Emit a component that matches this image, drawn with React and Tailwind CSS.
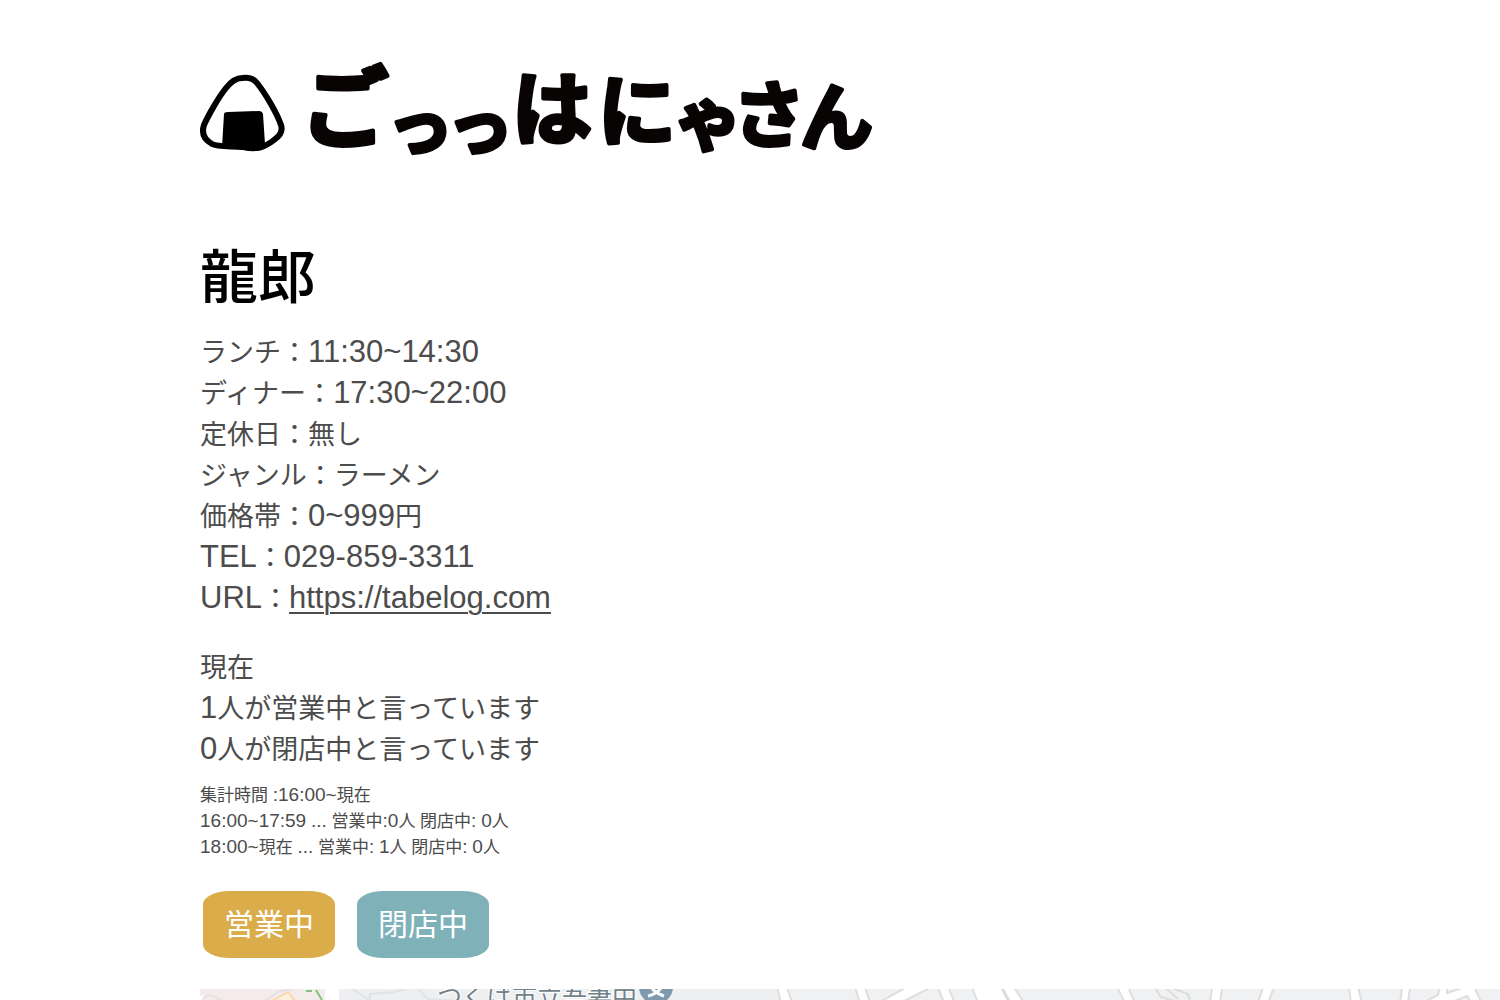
const HOURS = [
  'ランチ：11:30~14:30',
  'ディナー：17:30~22:00',
  '定休日：無し',
  'ジャンル：ラーメン',
  '価格帯：0~999円',
  'TEL：029-859-3311',
];

const LETTERS = [
  { c: 'ご', x: 101, y: 80, s: 88 },
  { c: 'っ', x: 187, y: 90, s: 66 },
  { c: 'っ', x: 247, y: 90, s: 66 },
  { c: 'は', x: 312, y: 78, s: 80 },
  { c: 'に', x: 398, y: 80, s: 78 },
  { c: 'ゃ', x: 474, y: 85, s: 68 },
  { c: 'さ', x: 533, y: 81, s: 72 },
  { c: 'ん', x: 600, y: 84, s: 73 },
];

function Logo() {
  return (
    <svg
      viewBox="0 0 680 100"
      className="block w-[680px] max-w-full overflow-visible font-['Noto_Sans_CJK_JP',sans-serif]"
      role="img"
      aria-label="ごっっはにゃさん"
    >
      <path
        d="M42 18C35 18 30 23 26 28C18 38 8 56 4 65C1 74 5 80 12 84C17 87 31 86 43 87C58 90 65 87 74 80C80 76 83 71 81 65C77 53 65 33 57 23C53 18 48 17 42 18Z"
        fill="none"
        stroke="#000"
        strokeWidth="6"
        strokeLinejoin="round"
      />
      <path d="M24 54Q24 52 28 52L59 51Q62 51 63 54L65 84Q55 91 43 89L22 87Z" fill="#000" />
      {LETTERS.map((l, i) => (
        <text
          key={i}
          x={l.x}
          y={l.y}
          fontSize={l.s}
          fill="#080403"
          stroke="#080403"
          strokeWidth="4"
          strokeLinejoin="round"
          className="font-bold"
        >
          {l.c}
        </text>
      ))}
    </svg>
  );
}

function Line({ children, small }) {
  return (
    <p>
      {children.split(/([\x21-\x7e]+)/).map((part, i) =>
        i % 2 ? (
          <span key={i} className={small ? 'text-[19px] leading-none' : 'text-[31px] leading-none'}>
            {part}
          </span>
        ) : (
          part
        ),
      )}
    </p>
  );
}

function MapStrip() {
  return (
    <svg
      viewBox="0 0 1300 300"
      preserveAspectRatio="xMinYMin slice"
      className="block h-[300px] w-full bg-[#f0f1f3]"
      role="img"
      aria-label="地図"
    >
      <path d="M0 0H577V300H0Z" fill="#eeeff0" />
      <path d="M0 0H125V300H0Z" fill="#f6ebeb" />
      <path d="M-2 11L10 6L28 14" fill="none" stroke="#e4e2e2" strokeWidth="2" />
      <path d="M-2 8L4 6L0 14Z" fill="#fff" />
      <path d="M62 14L78 3L92 0" fill="none" stroke="#e4e2e2" strokeWidth="2" />
      <path d="M72 12L88 3L95 12" fill="#fef0df" stroke="#fbd8aa" strokeWidth="2" />
      <path d="M106 2H112M116 1L122 11" fill="none" stroke="#7cc67c" strokeWidth="2" />
      <path d="M125 0H139L141 300H127Z" fill="#fff" />
      <path d="M152 0L166 9L172 12M169 12L170 5L195 3L205 0M218 0L228 10L265 12" fill="none" stroke="#e2e3e4" strokeWidth="2" />
      <g fill="#fff" stroke="#dedede" strokeWidth="2">
        <path d="M577 -2H587L592 14H581Z" />
        <path d="M655 -2H665L670 14H660Z" />
        <path d="M678 14L707 -2H732L700 14Z" />
        <path d="M738 -2H748L755 14H744Z" />
        <path d="M772 -2H814L824 14H778Z" />
        <path d="M917 -2L925 14H935L928 -2Z" />
        <path d="M1012 -2L1010 14H1020L1022 -2Z" />
        <path d="M1063 -2L1058 14H1068L1074 -2Z" />
        <path d="M1149 -2L1151 14H1162L1158 -2Z" />
        <path d="M1202 -2L1200 14H1208L1210 -2Z" />
        <path d="M1240 -2L1238 6L1222 14H1250L1267 7L1272 14H1282L1274 -2H1265L1247 4V-2Z" />
      </g>
      <path d="M802 -1L809 12" fill="none" stroke="#dcdcdc" strokeWidth="3" />
      <path d="M955 -1L961 8L975 12M966 -1L978 10M972 -1L988 5L990 12" fill="none" stroke="#dcdcdc" strokeWidth="2" />
      <text x="237" y="17" fontSize="25" fill="#71828b" stroke="#fff" strokeWidth="2" paintOrder="stroke">
        つくば市立吾妻中
      </text>
      <circle cx="456" cy="-2" r="17" fill="#7f9aad" />
      <path d="M449 -6Q453 4 464 7M463 -4Q458 5 448 7" fill="none" stroke="#fff" strokeWidth="3" />
    </svg>
  );
}

export default function App() {
  return (
    <div
      className="h-screen overflow-hidden bg-white pl-[200px] font-['Liberation_Sans','Noto_Sans_CJK_JP',sans-serif] text-[#4c4c4c]"
      lang="ja"
    >
      <header className="pt-[60px]">
        <Logo />
      </header>
      <main>
        <h1 className="pt-[78px] text-[58px] leading-[80px] font-medium text-black">龍郎</h1>
        <div className="mt-[15px] text-[27px] leading-[41px]">
          {HOURS.map((t) => (
            <Line key={t}>{t}</Line>
          ))}
          <p>
            <span className="text-[31px] leading-none">URL</span>：
            <a
              href="https://tabelog.com"
              className="text-[31px] leading-none underline decoration-2 underline-offset-4"
            >
              https://tabelog.com
            </a>
          </p>
        </div>
        <div className="mt-7 text-[27px] leading-[41px]">
          <Line>現在</Line>
          <Line>1人が営業中と言っています</Line>
          <Line>0人が閉店中と言っています</Line>
        </div>
        <div className="mt-3 text-[17px] leading-[26px]">
          <Line small>集計時間 :16:00~現在</Line>
          <Line small>16:00~17:59 ... 営業中:0人 閉店中: 0人</Line>
          <Line small>18:00~現在 ... 営業中: 1人 閉店中: 0人</Line>
        </div>
        <div className="mt-[30px] flex gap-[22px] pl-[3px] text-[30px] leading-[67px] text-white">
          <button type="button" className="rounded-[20%] bg-[#dbac4a] px-[21px]">
            営業中
          </button>
          <button type="button" className="rounded-[20%] bg-[#7eb2b8] px-[21px]">
            閉店中
          </button>
        </div>
        <div className="mt-[31px]">
          <MapStrip />
        </div>
      </main>
    </div>
  );
}
